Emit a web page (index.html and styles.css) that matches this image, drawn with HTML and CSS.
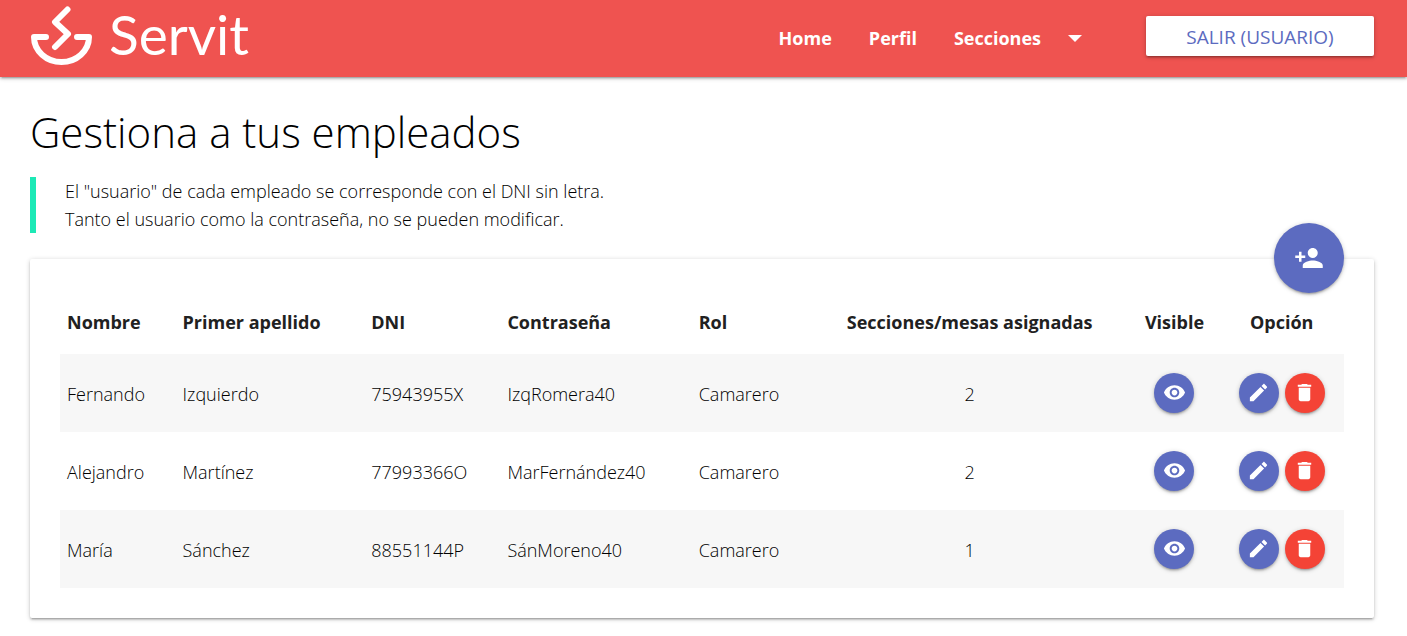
FILE: index.html
```html
<!DOCTYPE html>
<html lang="es">
<head>
<meta charset="utf-8">
<meta name="viewport" content="width=device-width, initial-scale=1">
<title>Servit - Empleados</title>
<link rel="stylesheet" href="styles.css">
</head>
<body>
<svg class="sprite" aria-hidden="true">
  <symbol id="eye" viewBox="0 0 24 24"><path d="M12 4.5C7 4.5 2.73 7.61 1 12c1.73 4.39 6 7.5 11 7.5s9.27-3.11 11-7.5c-1.73-4.39-6-7.500-11-7.500zM12 17c-2.760 0-5-2.240-5-5s2.240-5 5-5 5 2.240 5 5-2.240 5-5 5zm0-8c-1.660 0-3 1.340-3 3s1.340 3 3 3 3-1.340 3-3-1.340-3-3-3z"/></symbol>
  <symbol id="pencil" viewBox="0 0 24 24"><path d="M3 17.250V21h3.750L17.810 9.940l-3.750-3.750L3 17.250zM20.710 7.040c.39-.39.39-1.020 0-1.410l-2.340-2.340c-.39-.39-1.020-.39-1.410 0l-1.830 1.830 3.750 3.750 1.830-1.830z"/></symbol>
  <symbol id="trash" viewBox="0 0 24 24"><path d="M6 19c0 1.100.9 2 2 2h8c1.100 0 2-.9 2-2V7H6v12zM19 4h-3.500l-1-1h-5l-1 1H5v2h14V4z"/></symbol>
  <symbol id="person-add" viewBox="0 0 24 24"><path d="M15 12c2.210 0 4-1.790 4-4s-1.790-4-4-4-4 1.790-4 4 1.790 4 4 4zm-9-2V7H4v3H1v2h3v3h2v-3h3v-2H6zm9 4c-2.670 0-8 1.340-8 4v2h16v-2c0-2.660-5.330-4-8-4z"/></symbol>
</svg>
<header class="topbar">
  <a class="brand" href="#">
    <svg class="brand-mark" viewBox="0 0 62 60" aria-hidden="true"><path d="M37.500 3.500 25 16 38 28 25 41M16 31H4a27.500 25 0 0 0 55 0H47"/></svg>
    <span class="brand-name">Servit</span>
  </a>
  <nav class="menu">
    <a href="#">Home</a>
    <a href="#">Perfil</a>
    <a class="dropdown" href="#">Secciones <svg class="caret" viewBox="0 0 14 7" aria-hidden="true"><path d="M0 0h14L7 7z"/></svg></a>
    <button class="logout" type="button">SALIR (USUARIO)</button>
  </nav>
</header>
<main class="content">
  <h1>Gestiona a tus empleados</h1>
  <blockquote>El "usuario" de cada empleado se corresponde con el DNI sin letra.<br>Tanto el usuario como la contraseña, no se pueden modificar.</blockquote>
  <section class="card">
    <button class="round add" type="button" aria-label="Añadir empleado"><svg><use href="#person-add"/></svg></button>
    <table>
      <colgroup><col class="c-name"><col class="c-surname"><col class="c-dni"><col class="c-pass"><col class="c-role"><col class="c-tables"><col class="c-visible"><col class="c-option"></colgroup>
      <thead>
        <tr><th>Nombre</th><th>Primer apellido</th><th>DNI</th><th>Contraseña</th><th>Rol</th><th class="mid">Secciones/mesas asignadas</th><th class="mid">Visible</th><th class="mid">Opción</th></tr>
      </thead>
      <tbody>
        <tr><td>Fernando</td><td>Izquierdo</td><td>75943955X</td><td>IzqRomera40</td><td>Camarero</td><td class="mid">2</td>
          <td class="tools"><div class="actions"><button class="round" type="button" aria-label="Visible"><svg><use href="#eye"/></svg></button></div></td>
          <td class="tools"><div class="actions"><button class="round" type="button" aria-label="Editar"><svg><use href="#pencil"/></svg></button><button class="round red" type="button" aria-label="Eliminar"><svg><use href="#trash"/></svg></button></div></td></tr>
        <tr><td>Alejandro</td><td>Martínez</td><td>77993366O</td><td>MarFernández40</td><td>Camarero</td><td class="mid">2</td>
          <td class="tools"><div class="actions"><button class="round" type="button" aria-label="Visible"><svg><use href="#eye"/></svg></button></div></td>
          <td class="tools"><div class="actions"><button class="round" type="button" aria-label="Editar"><svg><use href="#pencil"/></svg></button><button class="round red" type="button" aria-label="Eliminar"><svg><use href="#trash"/></svg></button></div></td></tr>
        <tr><td>María</td><td>Sánchez</td><td>88551144P</td><td>SánMoreno40</td><td>Camarero</td><td class="mid">1</td>
          <td class="tools"><div class="actions"><button class="round" type="button" aria-label="Visible"><svg><use href="#eye"/></svg></button></div></td>
          <td class="tools"><div class="actions"><button class="round" type="button" aria-label="Editar"><svg><use href="#pencil"/></svg></button><button class="round red" type="button" aria-label="Eliminar"><svg><use href="#trash"/></svg></button></div></td></tr>
      </tbody>
    </table>
  </section>
</main>
</body>
</html>
```
FILE: styles.css
```css
:root {
  --shadow: 0 2px 2px 0 rgba(0, 0, 0, .14), 0 3px 1px -2px rgba(0, 0, 0, .12), 0 1px 5px 0 rgba(0, 0, 0, .2);
}
* { box-sizing: border-box; }
body {
  margin: 0;
  background: #fff;
  color: #000;
  font: 300 18px/28px "Open Sans", "Noto Sans", sans-serif;
}
.sprite { display: none; }
a { color: inherit; text-decoration: none; }
button { font: inherit; border: 0; cursor: pointer; }
.topbar {
  display: flex;
  align-items: center;
  justify-content: space-between;
  height: 77px;
  padding: 0 33px 0 30px;
  background: #ef5350;
  color: #fff;
  box-shadow: var(--shadow);
}
.brand {
  display: flex;
  align-items: center;
  gap: 17px;
  padding-bottom: 6px;
  font: 400 55px/54px Lato, sans-serif;
}
.brand-name { padding-bottom: 4px; }
.brand-mark {
  width: 62px;
  height: 60px;
  fill: none;
  stroke: #fff;
  stroke-width: 6;
  stroke-linecap: round;
  stroke-linejoin: round;
}
.menu {
  display: flex;
  align-items: center;
  gap: 37px;
  padding-bottom: 5px;
  font-weight: 700;
}
.menu > a { padding-top: 4px; }
.dropdown { display: flex; align-items: center; gap: 27px; }
.caret { width: 14px; height: 7px; fill: #fff; }
.logout {
  width: 228px;
  height: 40px;
  margin-left: 27px;
  padding: 2px 0 0;
  border-radius: 2px;
  background: #fff;
  color: #5c6bc0;
  font-size: 19px;
  font-weight: 400;
  box-shadow: var(--shadow);
}
.content { padding: 30px 33px 18px 30px; }
h1 { margin: 0 0 20px; font-size: 42px; line-height: 50px; font-weight: 300; }
blockquote { margin: 0 0 26px; padding-left: 29px; border-left: 6px solid #1de9b6; }
.card {
  position: relative;
  padding: 30px;
  border-radius: 2px;
  background: #fff;
  box-shadow: var(--shadow);
}
table { width: 100%; border-collapse: collapse; table-layout: fixed; }
.c-name { width: 9%; }
.c-surname { width: 14.7%; }
.c-dni { width: 10.6%; }
.c-pass { width: 14.9%; }
.c-role { width: 9.2%; }
.c-tables { width: 24.9%; }
.c-visible { width: 7%; }
.c-option { width: 9.7%; }
th, td { padding: 0 7px; text-align: left; white-space: nowrap; }
th { height: 65px; color: #212121; font-weight: 700; }
td { height: 78px; padding-top: 2px; }
td.tools { padding-top: 0; }
tbody tr:nth-child(odd) { background: #f7f7f7; }
th.mid, td.mid { text-align: center; }
.actions { display: flex; justify-content: center; gap: 6px; }
.round {
  display: flex;
  align-items: center;
  justify-content: center;
  flex: none;
  width: 40px;
  height: 40px;
  padding: 0 0 1px;
  border-radius: 50%;
  background: #5c6bc0;
  color: #fff;
  box-shadow: var(--shadow);
}
.round svg { width: 23px; height: 23px; fill: currentColor; }
.red { background: #f44336; }
.add { position: absolute; top: -36px; right: 30px; width: 70px; height: 70px; }
.add svg { width: 30px; height: 30px; }
```
